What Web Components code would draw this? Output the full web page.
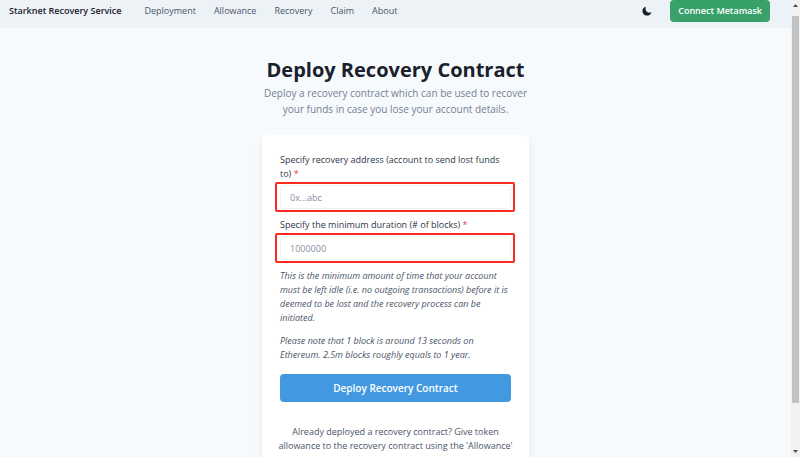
<!DOCTYPE html>
<html lang="en">
<head>
<meta charset="utf-8">
<meta name="viewport" content="width=device-width, initial-scale=1">
<title>Starknet Recovery Service</title>
<style>
    body {
        margin: 0;
        height: 100vh;
        overflow: hidden;
        background: #f7fafc;
        color: #4a5568;
        font: 9px/14px "Open Sans", "Noto Sans", sans-serif;
    }
</style>
</head>
<body>
<app-shell>
    <nav-bar slot="nav" brand="Starknet Recovery Service">
        <nav-link href="#deployment">Deployment</nav-link>
        <nav-link href="#allowance">Allowance</nav-link>
        <nav-link href="#recovery">Recovery</nav-link>
        <nav-link href="#claim">Claim</nav-link>
        <nav-link href="#about">About</nav-link>
    </nav-bar>
    <page-heading heading="Deploy Recovery Contract">Deploy a recovery contract which can be used to recover your funds in case you lose your account details.</page-heading>
    <form-card>
        <form-field label="Specify recovery address (account to send lost funds to)" placeholder="0x...abc"></form-field>
        <form-field label="Specify the minimum duration (# of blocks)" placeholder="1000000"></form-field>
        <help-text>
            <p>This is the minimum amount of time that your account must be left idle (i.e. no outgoing transactions) before it is deemed to be lost and the recovery process can be initiated.</p>
            <p>Please note that 1 block is around 13 seconds on Ethereum. 2.5m blocks roughly equals to 1 year.</p>
        </help-text>
        <submit-button>Deploy Recovery Contract</submit-button>
        <span slot="footer">Already deployed a recovery contract? Give token allowance to the recovery contract using the 'Allowance'</span>
    </form-card>
    <scroll-rail slot="rail"></scroll-rail>
</app-shell>

<script>
class AppShell extends HTMLElement {
    constructor() {
        super();
        this.attachShadow({mode: "open"});
    }

    connectedCallback() {
        let style = `
            :host {
                display: grid;
                grid-template-columns: 1fr 9px;
                height: 100vh;
            }

            .page {
                min-width: 0;
                overflow: hidden;
            }

            main {
                display: flex;
                flex-direction: column;
                align-items: center;
                gap: 18px;
                padding-top: 28px;
            }
        `;
        let html = `
            <div class="page">
                <slot name="nav"></slot>
                <main><slot></slot></main>
            </div>
            <slot name="rail"></slot>
        `;
        this.shadowRoot.innerHTML = "<style>" + style + "</style>" + html;
    }
}
customElements.define('app-shell', AppShell);

class NavBar extends HTMLElement {
    constructor() {
        super();
        this.attachShadow({mode: "open"});
    }

    connectedCallback() {
        let style = `
            :host {
                display: block;
                background: #edf2f7;
            }

            header {
                display: flex;
                align-items: center;
                padding: 0 21px 6px 9px;
            }

            .brand {
                color: #1a202c;
                font-weight: 600;
            }

            nav {
                display: flex;
                flex: 1;
                gap: 18px;
                margin-left: 23px;
            }

            button {
                border: 0;
                cursor: pointer;
                font: inherit;
            }

            .mode {
                display: flex;
                padding: 4px;
                margin-right: 14px;
                background: none;
                color: #1a202c;
            }

            .connect {
                height: 22px;
                padding: 0 8px;
                border-radius: 4px;
                background: #38a169;
                color: #fff;
                font-weight: 600;
            }
        `;
        let html = `
            <header>
                <span class="brand">${this.getAttribute('brand')}</span>
                <nav><slot></slot></nav>
                <button class="mode" type="button" aria-label="Toggle dark mode">
                    <svg width="10" height="10" viewBox="0 0 24 24" fill="currentColor"><path d="M9 1.500C4.400 2.800 1 7 1 12c0 6 4.900 11 11 11 5 0 9.400-3.400 10.700-8.200-1.300.7-2.800 1.100-4.500 1.100-5.300 0-9.200-3.900-9.700-9-.1-1.900 0-3.700.5-5.400Z"/></svg>
                </button>
                <button class="connect" type="button">Connect Metamask</button>
            </header>
        `;
        this.shadowRoot.innerHTML = "<style>" + style + "</style>" + html;
    }
}
customElements.define('nav-bar', NavBar);

class NavLink extends HTMLElement {
    constructor() {
        super();
        this.attachShadow({mode: "open"});
    }

    connectedCallback() {
        let style = `
            :host {
                display: block;
            }

            a {
                color: #4a5568;
                text-decoration: none;
            }
        `;
        let html = `<a href="${this.getAttribute('href')}"><slot></slot></a>`;
        this.shadowRoot.innerHTML = "<style>" + style + "</style>" + html;
    }
}
customElements.define('nav-link', NavLink);

class PageHeading extends HTMLElement {
    constructor() {
        super();
        this.attachShadow({mode: "open"});
    }

    connectedCallback() {
        let style = `
            :host {
                display: block;
                max-width: 267px;
                text-align: center;
            }

            h1 {
                margin: 0;
                color: #1a202c;
                font-size: 20px;
                line-height: 28px;
                font-weight: 700;
                white-space: nowrap;
            }

            p {
                margin: 1px 0 0;
                color: #718096;
                font-size: 10px;
                line-height: 16px;
            }
        `;
        let html = `
            <h1>${this.getAttribute('heading')}</h1>
            <p><slot></slot></p>
        `;
        this.shadowRoot.innerHTML = "<style>" + style + "</style>" + html;
    }
}
customElements.define('page-heading', PageHeading);

class FormCard extends HTMLElement {
    constructor() {
        super();
        this.attachShadow({mode: "open"});
    }

    connectedCallback() {
        let style = `
            :host {
                display: block;
                box-sizing: border-box;
                width: 100%;
                max-width: 267px;
                padding: 18px 18px 48px;
                border-radius: 5px;
                background: #fff;
                box-shadow: 0 6px 10px rgba(0, 0, 0, .06), 0 2px 4px rgba(0, 0, 0, .03);
            }

            form {
                display: flex;
                flex-direction: column;
                gap: 9px;
            }

            .footer {
                margin: 23px -5px 0;
                text-align: center;
            }
        `;
        let html = `
            <form>
                <slot></slot>
            </form>
            <p class="footer"><slot name="footer"></slot></p>
        `;
        this.shadowRoot.innerHTML = "<style>" + style + "</style>" + html;
    }
}
customElements.define('form-card', FormCard);

class FormField extends HTMLElement {
    constructor() {
        super();
        this.attachShadow({mode: "open"});
    }

    connectedCallback() {
        let style = `
            :host {
                display: block;
            }

            label {
                display: block;
                margin-bottom: 4px;
                color: #2d3748;
                font-weight: 500;
            }

            .star {
                color: #e53e3e;
                font-weight: 400;
            }

            .control {
                position: relative;
            }

            /* red highlight drawn over the input */
            .control::after {
                content: "";
                position: absolute;
                inset: -3px -4px -3px -5px;
                border: 2px solid #fa2a20;
                border-radius: 2px;
                pointer-events: none;
            }

            input {
                display: block;
                box-sizing: border-box;
                width: 100%;
                height: 24px;
                padding: 0 9px;
                border: 1px solid #edf2f7;
                border-radius: 4px;
                background: #fff;
                color: #2d3748;
                font: inherit;
            }

            input::placeholder {
                color: #8490a3;
            }
        `;
        let html = `
            <label for="field">${this.getAttribute('label')} <span class="star">*</span></label>
            <div class="control">
                <input id="field" type="text" placeholder="${this.getAttribute('placeholder')}" required>
            </div>
        `;
        this.shadowRoot.innerHTML = "<style>" + style + "</style>" + html;
    }
}
customElements.define('form-field', FormField);

class HelpText extends HTMLElement {
    constructor() {
        super();
        this.attachShadow({mode: "open"});
    }

    connectedCallback() {
        let style = `
            :host {
                display: flex;
                flex-direction: column;
                gap: 9px;
                font-style: italic;
            }

            ::slotted(p) {
                margin: 0;
            }
        `;
        this.shadowRoot.innerHTML = "<style>" + style + "</style><slot></slot>";
    }
}
customElements.define('help-text', HelpText);

class SubmitButton extends HTMLElement {
    constructor() {
        super();
        this.attachShadow({mode: "open"});
    }

    connectedCallback() {
        let style = `
            :host {
                display: block;
                margin-top: 3px;
            }

            button {
                display: block;
                width: 100%;
                height: 28px;
                padding: 0;
                border: 0;
                border-radius: 4px;
                background: #4299e1;
                color: #fff;
                cursor: pointer;
                font: inherit;
                font-size: 10px;
                font-weight: 600;
            }
        `;
        let html = `<button type="submit"><slot></slot></button>`;
        this.shadowRoot.innerHTML = "<style>" + style + "</style>" + html;
    }
}
customElements.define('submit-button', SubmitButton);

class ScrollRail extends HTMLElement {
    constructor() {
        super();
        this.attachShadow({mode: "open"});
    }

    connectedCallback() {
        let style = `
            :host {
                display: flex;
                flex-direction: column;
                align-items: center;
                background: #f1f1f1;
            }

            svg {
                flex: none;
                fill: #505050;
            }

            .track {
                display: flex;
                flex: 1;
                width: 7px;
                padding: 5px 0;
            }

            .thumb {
                width: 100%;
                height: 91%;
                background: #c1c1c1;
            }
        `;
        let html = `
            <svg width="7" height="11" viewBox="0 0 7 11"><path d="M1 7 3.500 4 6 7Z"/></svg>
            <div class="track"><div class="thumb"></div></div>
            <svg width="7" height="11" viewBox="0 0 7 11"><path d="M1 4 3.500 7 6 4Z"/></svg>
        `;
        this.shadowRoot.innerHTML = "<style>" + style + "</style>" + html;
    }
}
customElements.define('scroll-rail', ScrollRail);
</script>
</body>
</html>
